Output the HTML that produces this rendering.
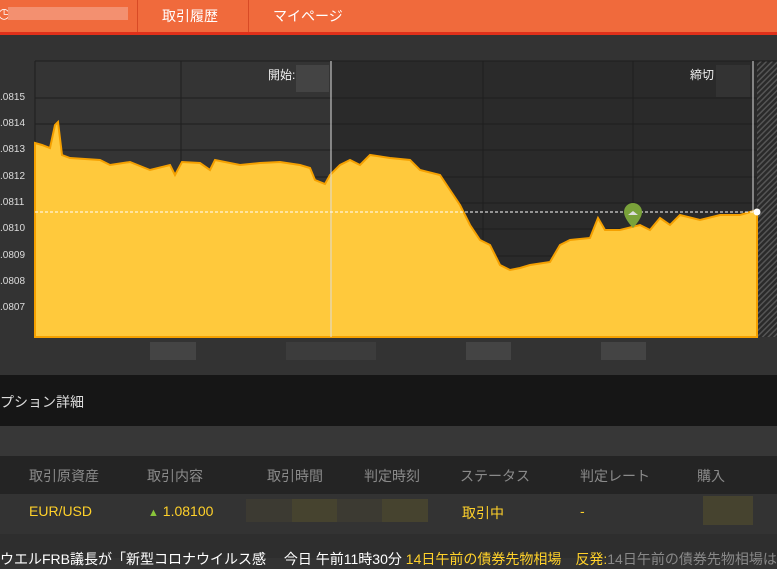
<!DOCTYPE html>
<html><head><meta charset="utf-8"><style>
body{margin:0;width:777px;height:558px;overflow:hidden;background:#333;font-family:"Liberation Sans","Noto Sans CJK JP",sans-serif;position:relative}
.a{position:absolute}
.nav{left:0;top:0;width:777px;height:32px;background:#f06a3c;border-bottom:3px solid #e0301a}
.nav span{position:absolute;top:6px;color:#fff;font-size:14px}
.yl{position:absolute;left:0;color:#ddd;font-size:10px}
.th{position:absolute;top:466px;color:#8a8a8a;font-size:14px}
</style></head><body>
<div class="a nav">
 <div class="a" style="left:0;top:0;width:1px;height:32px"></div>
 <span style="left:-2px;top:5px">◷</span>
 <div class="a" style="left:8px;top:7px;width:120px;height:13px;background:#f39070"></div>
 <div class="a" style="left:137px;top:0;width:1px;height:32px;background:#d84a25"></div>
 <span style="left:162px">取引履歴</span>
 <div class="a" style="left:248px;top:0;width:1px;height:32px;background:#d84a25"></div>
 <span style="left:273px">マイページ</span>
</div>
<svg class="a" style="left:0;top:35px" width="777" height="340">
 <defs><pattern id="h" width="4" height="4" patternUnits="userSpaceOnUse" patternTransform="rotate(45)"><rect width="4" height="4" fill="#2a2a2a"/><rect width="1.5" height="4" fill="#555"/></pattern></defs>
 <rect x="35" y="26" width="296" height="276" fill="#343434"/>
 <rect x="331" y="26" width="426" height="276" fill="#2a2a2a"/>
 <rect x="757" y="26" width="20" height="276" fill="url(#h)"/>
 <g stroke="#1e1e1e" stroke-width="1">
  <line x1="35" y1="26" x2="777" y2="26"/><line x1="35" y1="26" x2="35" y2="302"/>
  <line x1="35" y1="63" x2="757" y2="63"/><line x1="35" y1="89" x2="757" y2="89"/><line x1="35" y1="115" x2="757" y2="115"/><line x1="35" y1="142" x2="757" y2="142"/><line x1="35" y1="168" x2="757" y2="168"/><line x1="35" y1="194" x2="757" y2="194"/><line x1="35" y1="221" x2="757" y2="221"/><line x1="35" y1="247" x2="757" y2="247"/><line x1="35" y1="273" x2="757" y2="273"/>
  <line x1="181" y1="26" x2="181" y2="302"/><line x1="483" y1="26" x2="483" y2="302"/><line x1="633" y1="26" x2="633" y2="302"/>
 </g>
 <polygon fill="#ffc93c" stroke="#f5a000" stroke-width="2" points="35,108 42,110 50,113 55,90 58,87 62,120 70,123 100,125 110,130 130,127 150,135 170,130 175,140 182,127 200,128 210,135 215,125 240,130 260,128 280,127 300,130 310,133 315,145 325,149 330,140 340,130 350,125 360,130 370,120 390,123 410,125 420,135 440,140 450,155 460,170 470,190 480,205 490,210 500,230 510,235 520,233 530,230 550,227 560,210 570,205 590,203 598,183 605,195 620,195 640,190 650,195 660,183 670,190 680,180 700,185 720,180 740,180 757,175 757,302 35,302"/>
 <line x1="331" y1="26" x2="331" y2="302" stroke="#ddd"/>
 <line x1="753" y1="26" x2="753" y2="177" stroke="#ddd"/>
 <line x1="35" y1="177" x2="757" y2="177" stroke="#fff" stroke-dasharray="3,2"/>
 <circle cx="757" cy="177" r="3.5" fill="#fff"/>
 <path d="M633 168 a9 9 0 1 1 0.01 0 Z" fill="none"/>
 <path d="M624 179 a9 9 0 0 1 18 0 q0 6 -9 16 q-9 -10 -9 -16z" fill="#7aa23a" transform="translate(0,-2)"/>
 <path d="M628 180 l5 -4 l5 4 z" fill="#ddd"/>
 <text x="268" y="44" fill="#eee" font-size="12">開始:</text>
 <rect x="296" y="30" width="33" height="27" fill="#444"/>
 <text x="690" y="44" fill="#eee" font-size="12">締切</text>
 <rect x="716" y="30" width="34" height="32" fill="#333"/>
 <rect x="150" y="307" width="46" height="18" fill="#444"/>
 <rect x="286" y="307" width="90" height="18" fill="#3c3c3c"/>
 <rect x="466" y="307" width="45" height="18" fill="#444"/>
 <rect x="601" y="307" width="45" height="18" fill="#444"/>
</svg>
<div class="yl" style="top:92px">.0815</div><div class="yl" style="top:118px">.0814</div><div class="yl" style="top:144px">.0813</div><div class="yl" style="top:171px">.0812</div><div class="yl" style="top:197px">.0811</div><div class="yl" style="top:223px">.0810</div><div class="yl" style="top:250px">.0809</div><div class="yl" style="top:276px">.0808</div><div class="yl" style="top:302px">.0807</div>
<div class="a" style="left:0;top:375px;width:777px;height:51px;background:#161616"><span class="a" style="left:0;top:17px;color:#ddd;font-size:14px">プション詳細</span></div>
<div class="a" style="left:0;top:426px;width:777px;height:30px;background:#373737"></div>
<div class="a" style="left:0;top:456px;width:777px;height:38px;background:#242424"></div>
<span class="th" style="left:29px">取引原資産</span><span class="th" style="left:99px;left:99px"></span><span class="th" style="left:147px">取引内容</span><span class="th" style="left:267px">取引時間</span><span class="th" style="left:364px">判定時刻</span><span class="th" style="left:460px">ステータス</span><span class="th" style="left:580px">判定レート</span><span class="th" style="left:697px">購入</span>
<div class="a" style="left:0;top:494px;width:777px;height:40px;background:#333"></div>
<span class="a" style="left:29px;top:503px;color:#ffd12a;font-size:14px">EUR/USD</span>
<span class="a" style="left:148px;top:503px;color:#ffd12a;font-size:14px"><span style="color:#8ac43a;font-size:11px">▲</span> 1.08100</span>
<div class="a" style="left:246px;top:499px;width:182px;height:23px;background:#3c3a32"></div>
<div class="a" style="left:292px;top:499px;width:45px;height:23px;background:#46432f"></div>
<div class="a" style="left:382px;top:499px;width:46px;height:23px;background:#46432f"></div>
<span class="a" style="left:462px;top:503px;color:#ffd12a;font-size:14px">取引中</span>
<span class="a" style="left:580px;top:503px;color:#ffd12a;font-size:14px">-</span>
<div class="a" style="left:703px;top:496px;width:50px;height:29px;background:#46432f"></div>
<div class="a" style="left:0;top:534px;width:777px;height:24px;background:#2e2e2e"></div>
<div class="a" style="left:0;top:549px;white-space:nowrap;font-size:14px;color:#fff">ウエルFRB議長が「新型コロナウイルス感 　今日 午前11時30分 <span style="color:#ffd12a">14日午前の債券先物相場　反発:</span><span style="color:#888">14日午前の債券先物相場は</span></div>
</body></html>
